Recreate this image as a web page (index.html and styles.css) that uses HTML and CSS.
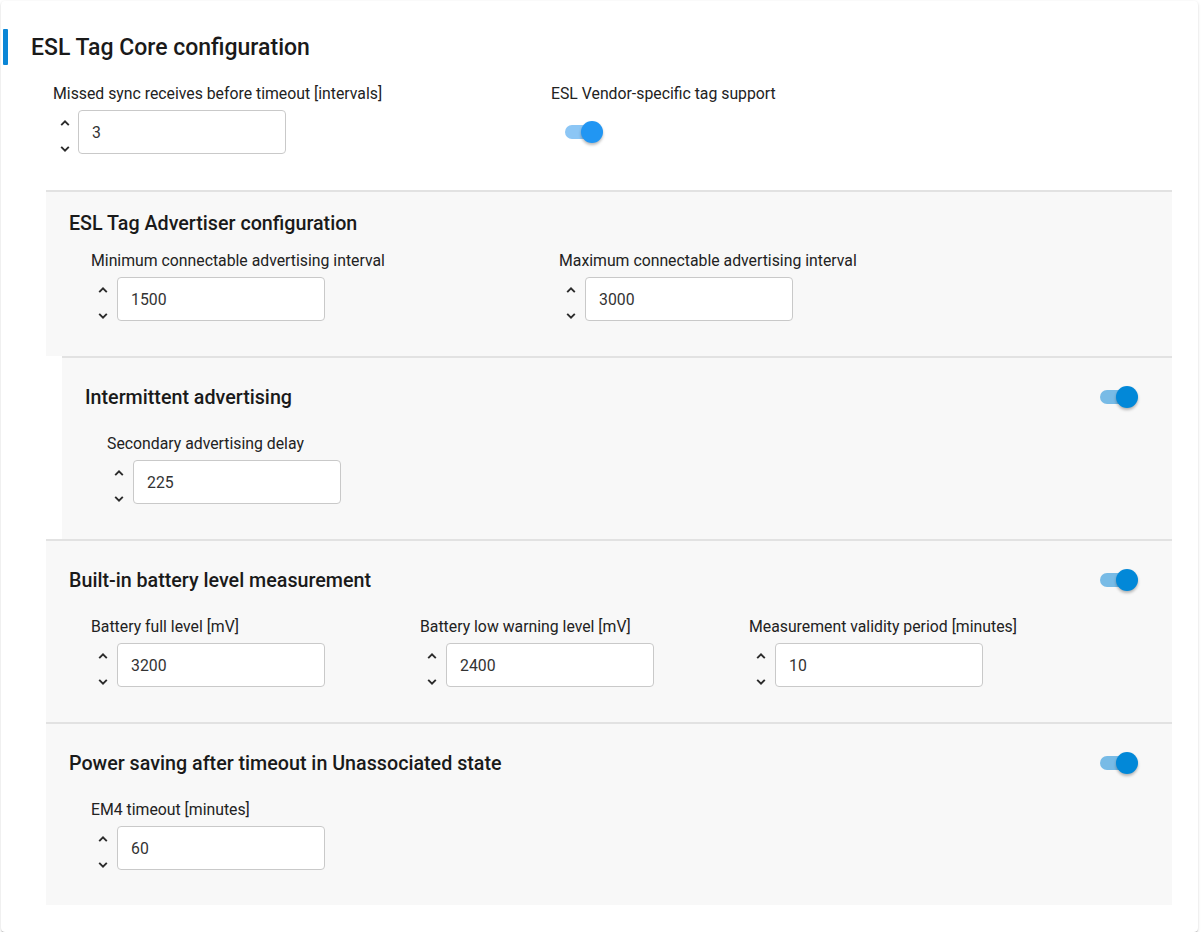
FILE: index.html
```html
<!DOCTYPE html>
<html lang="en">
<head>
<meta charset="utf-8">
<title>ESL Tag Core configuration</title>
<link rel="stylesheet" href="styles.css">
</head>
<body>
<div class="card">
  <div class="card-header">
    <span class="accent"></span>
    <h1 class="title">ESL Tag Core configuration</h1>
  </div>

  <div class="fields top-fields">
    <div class="field">
      <label class="label">Missed sync receives before timeout [intervals]</label>
      <div class="control">
        <div class="spinner">
          <svg viewBox="0 0 10 8" width="10" height="8"><path d="M1.2 6.2 L5 2.4 L8.8 6.2" fill="none" stroke="#2b2b2b" stroke-width="1.9"/></svg>
          <svg viewBox="0 0 10 8" width="10" height="8"><path d="M1.2 1.8 L5 5.6 L8.8 1.8" fill="none" stroke="#2b2b2b" stroke-width="1.9"/></svg>
        </div>
        <div class="input">3</div>
      </div>
    </div>
    <div class="field">
      <label class="label">ESL Vendor-specific tag support</label>
      <div class="control">
        <span class="switch switch-light"><span class="track"></span><span class="thumb"></span></span>
      </div>
    </div>
  </div>

  <section class="panel p-adv">
    <div class="panel-head">
      <h2 class="heading">ESL Tag Advertiser configuration</h2>
    </div>
    <div class="fields cols-2">
      <div class="field">
        <label class="label">Minimum connectable advertising interval</label>
        <div class="control">
          <div class="spinner">
            <svg viewBox="0 0 10 8" width="10" height="8"><path d="M1.2 6.2 L5 2.4 L8.8 6.2" fill="none" stroke="#2b2b2b" stroke-width="1.9"/></svg>
            <svg viewBox="0 0 10 8" width="10" height="8"><path d="M1.2 1.8 L5 5.6 L8.8 1.8" fill="none" stroke="#2b2b2b" stroke-width="1.9"/></svg>
          </div>
          <div class="input">1500</div>
        </div>
      </div>
      <div class="field">
        <label class="label">Maximum connectable advertising interval</label>
        <div class="control">
          <div class="spinner">
            <svg viewBox="0 0 10 8" width="10" height="8"><path d="M1.2 6.2 L5 2.4 L8.8 6.2" fill="none" stroke="#2b2b2b" stroke-width="1.9"/></svg>
            <svg viewBox="0 0 10 8" width="10" height="8"><path d="M1.2 1.8 L5 5.6 L8.8 1.8" fill="none" stroke="#2b2b2b" stroke-width="1.9"/></svg>
          </div>
          <div class="input">3000</div>
        </div>
      </div>
    </div>
  </section>

  <section class="panel panel-toggle panel-sub">
    <div class="panel-head">
      <h2 class="heading">Intermittent advertising</h2>
      <span class="switch"><span class="track"></span><span class="thumb"></span></span>
    </div>
    <div class="fields">
      <div class="field">
        <label class="label">Secondary advertising delay</label>
        <div class="control">
          <div class="spinner">
            <svg viewBox="0 0 10 8" width="10" height="8"><path d="M1.2 6.2 L5 2.4 L8.8 6.2" fill="none" stroke="#2b2b2b" stroke-width="1.9"/></svg>
            <svg viewBox="0 0 10 8" width="10" height="8"><path d="M1.2 1.8 L5 5.6 L8.8 1.8" fill="none" stroke="#2b2b2b" stroke-width="1.9"/></svg>
          </div>
          <div class="input">225</div>
        </div>
      </div>
    </div>
  </section>

  <section class="panel panel-toggle">
    <div class="panel-head">
      <h2 class="heading">Built-in battery level measurement</h2>
      <span class="switch"><span class="track"></span><span class="thumb"></span></span>
    </div>
    <div class="fields cols-3">
      <div class="field">
        <label class="label">Battery full level [mV]</label>
        <div class="control">
          <div class="spinner">
            <svg viewBox="0 0 10 8" width="10" height="8"><path d="M1.2 6.2 L5 2.4 L8.8 6.2" fill="none" stroke="#2b2b2b" stroke-width="1.9"/></svg>
            <svg viewBox="0 0 10 8" width="10" height="8"><path d="M1.2 1.8 L5 5.6 L8.8 1.8" fill="none" stroke="#2b2b2b" stroke-width="1.9"/></svg>
          </div>
          <div class="input">3200</div>
        </div>
      </div>
      <div class="field">
        <label class="label">Battery low warning level [mV]</label>
        <div class="control">
          <div class="spinner">
            <svg viewBox="0 0 10 8" width="10" height="8"><path d="M1.2 6.2 L5 2.4 L8.8 6.2" fill="none" stroke="#2b2b2b" stroke-width="1.9"/></svg>
            <svg viewBox="0 0 10 8" width="10" height="8"><path d="M1.2 1.8 L5 5.6 L8.8 1.8" fill="none" stroke="#2b2b2b" stroke-width="1.9"/></svg>
          </div>
          <div class="input">2400</div>
        </div>
      </div>
      <div class="field">
        <label class="label">Measurement validity period [minutes]</label>
        <div class="control">
          <div class="spinner">
            <svg viewBox="0 0 10 8" width="10" height="8"><path d="M1.2 6.2 L5 2.4 L8.8 6.2" fill="none" stroke="#2b2b2b" stroke-width="1.9"/></svg>
            <svg viewBox="0 0 10 8" width="10" height="8"><path d="M1.2 1.8 L5 5.6 L8.8 1.8" fill="none" stroke="#2b2b2b" stroke-width="1.9"/></svg>
          </div>
          <div class="input">10</div>
        </div>
      </div>
    </div>
  </section>

  <section class="panel panel-toggle">
    <div class="panel-head">
      <h2 class="heading">Power saving after timeout in Unassociated state</h2>
      <span class="switch"><span class="track"></span><span class="thumb"></span></span>
    </div>
    <div class="fields">
      <div class="field">
        <label class="label">EM4 timeout [minutes]</label>
        <div class="control">
          <div class="spinner">
            <svg viewBox="0 0 10 8" width="10" height="8"><path d="M1.2 6.2 L5 2.4 L8.8 6.2" fill="none" stroke="#2b2b2b" stroke-width="1.9"/></svg>
            <svg viewBox="0 0 10 8" width="10" height="8"><path d="M1.2 1.8 L5 5.6 L8.8 1.8" fill="none" stroke="#2b2b2b" stroke-width="1.9"/></svg>
          </div>
          <div class="input">60</div>
        </div>
      </div>
    </div>
  </section>
</div>
</body>
</html>
```

FILE: styles.css
```css
* { box-sizing: border-box; }

html, body {
  margin: 0;
  padding: 0;
  background: #ffffff;
}

body {
  font-family: Roboto, "Liberation Sans", Arial, sans-serif;
  color: #1f1f1f;
}

.card {
  margin: 1px 0 0 1px;
  width: 1197px;
  height: 931px;
  background: #ffffff;
  border-radius: 4px;
  box-shadow: 0 2px 1px -1px rgba(0, 0, 0, 0.2), 0 1px 1px 0 rgba(0, 0, 0, 0.12), 0 1px 3px 0 rgba(0, 0, 0, 0.14);
  padding: 0 26px 0 45px;
  overflow: hidden;
}

.card-header {
  display: flex;
  align-items: center;
  height: 36px;
  margin: 28px 0 0 -43px;
}

.accent {
  width: 5px;
  height: 36px;
  background: #0a86d6;
  border-radius: 1px;
  flex: none;
}

.title {
  margin: 0 0 0 23px;
  padding-top: 2px;
  font-size: 23px;
  font-weight: 500;
  line-height: 28px;
  color: #1a1a1a;
}

.fields {
  display: grid;
  grid-template-columns: auto;
  justify-content: start;
}

.top-fields {
  margin-top: 18px;
  padding-left: 7px;
  grid-template-columns: 498px auto;
}

.cols-2 { grid-template-columns: 468px auto; }
.cols-3 { grid-template-columns: 329px 329px auto; }

.field {
  display: flex;
  flex-direction: column;
}

.label {
  font-size: 15.8px;
  line-height: 22px;
  color: #222222;
  white-space: nowrap;
}

.control {
  display: flex;
  align-items: center;
  height: 44px;
  margin-top: 5px;
}

.spinner {
  width: 26px;
  height: 44px;
  display: flex;
  flex-direction: column;
  gap: 18px;
  padding: 9px 0 0 7px;
  flex: none;
}

.top-fields .spinner { width: 25px; }

.spinner svg { display: block; }

.input {
  width: 208px;
  height: 44px;
  border: 1px solid #c9c9c9;
  border-radius: 4px;
  background: #ffffff;
  padding: 2px 0 0 13px;
  font-size: 15.8px;
  line-height: 40px;
  color: #333333;
}

/* switches */
.switch {
  position: relative;
  display: inline-block;
  width: 38px;
  height: 22px;
  flex: none;
}

.top-fields .switch { margin-left: 14px; }

.switch .track {
  position: absolute;
  left: 0;
  top: 4px;
  width: 34px;
  height: 14px;
  border-radius: 7px;
  background: #78bbe6;
}

.switch .thumb {
  position: absolute;
  left: 16px;
  top: 0;
  width: 22px;
  height: 22px;
  border-radius: 50%;
  background: #0288d8;
  box-shadow: 0 2px 3px rgba(0, 0, 0, 0.28);
}

.switch-light .track { background: #8cc6f5; }
.switch-light .thumb { background: #2196f3; }

/* panels */
.panel {
  background: #f8f8f8;
  border-top: 2px solid #e2e2e2;
  padding: 18px 34px 35px 23px;
}

.p-adv { margin-top: 36px; }

.panel-sub { margin-left: 16px; }

.panel-head {
  display: flex;
  align-items: center;
  justify-content: space-between;
  height: 24px;
}

.panel-toggle { padding-top: 19px; }
.panel-toggle .panel-head { height: 40px; }

.heading {
  margin: 0;
  padding-top: 2px;
  font-size: 19.7px;
  font-weight: 500;
  line-height: 24px;
  color: #1a1a1a;
}

.panel .fields {
  margin-top: 16px;
  padding-left: 22px;
}

.p-adv .panel-head { height: 26px; }
.panel.p-adv .fields { margin-top: 14px; }
```
